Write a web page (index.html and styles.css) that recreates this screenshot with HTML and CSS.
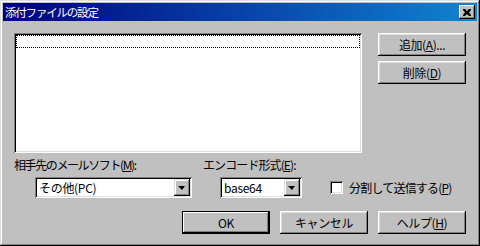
FILE: index.html
```html
<!DOCTYPE html>
<html lang="ja">
<head>
    <meta charset="UTF-8">
    <title>添付ファイルの設定</title>
    <link rel="stylesheet" href="styles.css">
</head>
<body>

    <div class="window">
        <div class="titlebar">
            <span class="title">添付ファイルの設定</span>
            <button class="close-btn" aria-label="閉じる">
                <svg width="8" height="7" viewBox="0 0 8 7">
                    <path d="M0 0h2l2 2 2-2h2v1l-2 2.5 2 2.5v1h-2l-2-2-2 2h-2v-1l2-2.5-2-2.5z" fill="#000"/>
                </svg>
            </button>
        </div>

        <div class="content">
            <div class="top-row">
                <div class="listbox">
                    <div class="focus-row"></div>
                </div>
                <div class="side-buttons">
                    <button class="btn">追加(<u>A</u>)...</button>
                    <button class="btn">削除(<u>D</u>)</button>
                </div>
            </div>

            <div class="options-row">
                <div class="field field-mail">
                    <label class="field-label">相手先のメールソフト(<u>M</u>):</label>
                    <div class="combo combo-mail">
                        <span class="combo-value">その他(PC)</span>
                        <span class="combo-arrow"></span>
                    </div>
                </div>
                <div class="field field-encode">
                    <label class="field-label">エンコード形式(<u>E</u>):</label>
                    <div class="combo combo-encode">
                        <span class="combo-value">base64</span>
                        <span class="combo-arrow"></span>
                    </div>
                </div>
                <label class="check">
                    <span class="check-box"></span>
                    <span>分割して送信する(<u>P</u>)</span>
                </label>
            </div>

            <div class="dialog-buttons">
                <button class="btn btn-default">OK</button>
                <button class="btn">キャンセル</button>
                <button class="btn">ヘルプ(<u>H</u>)</button>
            </div>
        </div>
    </div>

</body>
</html>
```

FILE: styles.css
```css
/* Reset */
html, body {
    margin: 0;
    padding: 0;
    background: #c0c0c0;
}

body {
    font-family: "Noto Sans CJK JP", "DejaVu Sans", sans-serif;
    font-size: 12px;
    color: #000;
}

u {
    text-decoration: underline;
    text-underline-offset: 1px;
}

/* Outer window frame, classic raised 3D edge */
.window {
    width: 480px;
    height: 246px;
    box-sizing: border-box;
    padding: 3px;
    background: #c0c0c0;
    box-shadow:
        inset -1px -1px #000,
        inset 1px 1px #dfdfdf,
        inset -2px -2px #808080,
        inset 2px 2px #fff;
}

.titlebar {
    height: 18px;
    display: flex;
    align-items: center;
    justify-content: space-between;
    padding: 0 2px 0 2px;
    background: linear-gradient(to right, #000080, #1084d0);
}

.title {
    color: #fff;
    font-size: 11.5px;
    line-height: 18px;
    letter-spacing: -1.2px;
}

.close-btn {
    width: 16px;
    height: 14px;
    padding: 0;
    border: 0;
    display: flex;
    align-items: center;
    justify-content: center;
    background: #c0c0c0;
    box-shadow:
        inset -1px -1px #000,
        inset 1px 1px #fff,
        inset -2px -2px #808080;
}

.content {
    padding: 12px 11px 0 11px;
}

/* List + side buttons */
.top-row {
    display: flex;
    gap: 16px;
}

.listbox {
    width: 348px;
    height: 120px;
    box-sizing: border-box;
    padding: 2px;
    background: #fff;
    box-shadow:
        inset 1px 1px #808080,
        inset -1px -1px #fff,
        inset 2px 2px #000,
        inset -2px -2px #dfdfdf;
}

.focus-row {
    height: 13px;
    box-sizing: border-box;
    border: 1px dotted #000;
}

.side-buttons {
    display: flex;
    flex-direction: column;
    gap: 5px;
}

/* Raised push button */
.btn {
    width: 88px;
    height: 23px;
    padding: 0;
    border: 0;
    background: #c0c0c0;
    font-family: inherit;
    font-size: 12px;
    letter-spacing: -0.4px;
    color: #000;
    box-shadow:
        inset -1px -1px #000,
        inset 1px 1px #fff,
        inset -2px -2px #808080,
        inset 2px 2px #dfdfdf;
}

.btn-default {
    box-shadow:
        inset 0 0 0 1px #000,
        inset -2px -2px #000,
        inset 2px 2px #fff,
        inset -3px -3px #808080;
}

/* Options */
.options-row {
    display: flex;
    align-items: flex-end;
    margin-top: 4px;
}

.field {
    display: flex;
    flex-direction: column;
    gap: 5px;
}

.field-label {
    line-height: 15px;
    white-space: nowrap;
    letter-spacing: -1.4px;
}

.field-encode .field-label {
    letter-spacing: -0.9px;
}

.field-mail .combo {
    margin-left: 21px;
    width: 157px;
}

.field-encode {
    margin-left: 11px;
}

.field-encode .combo {
    margin-left: 17px;
    width: 82px;
}

.combo {
    height: 21px;
    box-sizing: border-box;
    padding: 2px;
    display: flex;
    align-items: stretch;
    background: #fff;
    box-shadow:
        inset 1px 1px #808080,
        inset -1px -1px #fff,
        inset 2px 2px #000,
        inset -2px -2px #dfdfdf;
}

.combo-value {
    flex: 1;
    padding-left: 2px;
    line-height: 17px;
    white-space: nowrap;
    overflow: hidden;
    letter-spacing: -0.3px;
}

.combo-arrow {
    width: 16px;
    position: relative;
    background: #c0c0c0;
    box-shadow:
        inset -1px -1px #000,
        inset 1px 1px #dfdfdf,
        inset -2px -2px #808080,
        inset 2px 2px #fff;
}

/* small black triangle on the dropdown button */
.combo-arrow::after {
    content: "";
    position: absolute;
    left: 4px;
    top: 7px;
    border-left: 4px solid transparent;
    border-right: 3px solid transparent;
    border-top: 4px solid #000;
}

.check {
    display: flex;
    align-items: center;
    gap: 6px;
    margin-left: 28px;
    height: 21px;
    white-space: nowrap;
    letter-spacing: -0.8px;
}

.check-box {
    width: 13px;
    height: 13px;
    box-sizing: border-box;
    background: #fff;
    box-shadow:
        inset 1px 1px #808080,
        inset -1px -1px #fff,
        inset 2px 2px #000,
        inset -2px -2px #dfdfdf;
}

/* Bottom row of dialog buttons */
.dialog-buttons {
    display: flex;
    justify-content: flex-end;
    gap: 10px;
    margin-top: 13px;
}
```
